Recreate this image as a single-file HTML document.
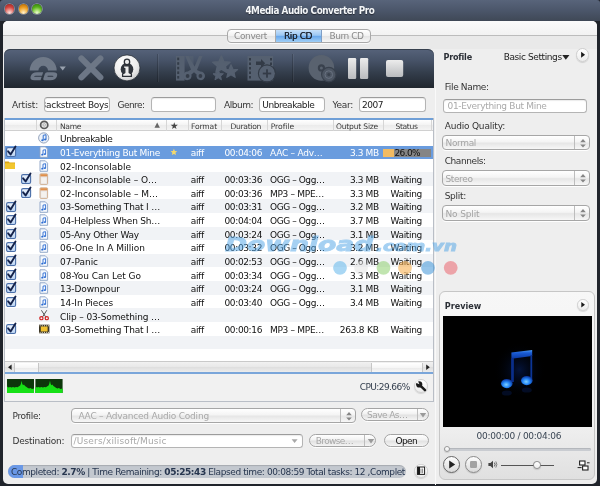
<!DOCTYPE html>
<html lang="en"><head><meta charset="utf-8"><title>4Media Audio Converter Pro</title>
<style>
html,body{margin:0;padding:0;}
body{width:600px;height:486px;overflow:hidden;background:#20242b;position:relative;font-family:"DejaVu Sans","Liberation Sans",sans-serif;font-size:9px;}
div,span,svg{position:absolute;box-sizing:border-box;}
b{font-weight:bold;}
.t{white-space:nowrap;line-height:14px;height:14px;}
.win{left:0;top:0;width:600px;height:486px;background:#20242b;border-radius:3px;}
.titlebar{left:0;top:0;width:600px;height:21px;border-radius:3px 3px 0 0;background:linear-gradient(#58647a,#4b566a 50%,#3f4856);}
.tl{width:9.8px;height:9.8px;border-radius:50%;top:4.1px;box-shadow:0 0 0 .8px rgba(235,240,248,.45),0 0 2px rgba(0,0,0,.5);}
.inner{left:2.8px;top:21px;width:594px;height:462.5px;background:#eeeeee;border-radius:5px;overflow:hidden;}
.tabtop{left:0;top:0;width:594px;height:14px;background:linear-gradient(#fbfbfb,#f2f2f2);}
.tabline{left:0;top:14px;width:594px;height:1px;background:#bcbcbc;}
.tabbot{left:0;top:15px;width:594px;height:13px;background:#e9e9e9;}
.seg{left:227.4px;top:28.5px;width:143.2px;height:14.2px;border-radius:4px;border:1px solid #a9a9a9;background:linear-gradient(#ffffff,#f1f1f1 48%,#e4e4e4 52%,#f6f6f6);overflow:hidden;box-shadow:0 1px 0 rgba(255,255,255,.8);}
.segsel{left:46.4px;top:-1px;width:47.6px;height:14.2px;background:linear-gradient(#cfe5fb,#9cc8f4 45%,#69a8ec 52%,#a9d6f9);border-left:1px solid #7f9fc6;border-right:1px solid #7f9fc6;}
.toolbar{left:4.3px;top:48.8px;width:429.8px;height:39px;border-radius:6px 6px 0 0;background:linear-gradient(#56637a,#465267 30%,#343e4c 60%,#20262e);box-shadow:inset 0 1px 0 rgba(30,36,44,.55);}
.tsep{top:5px;width:1px;height:28px;background:rgba(0,0,0,.18);box-shadow:1px 0 0 rgba(255,255,255,.06);}
.inp{background:#fff;border:1px solid #b4b4b4;border-top-color:#9c9c9c;border-radius:3.5px;height:14.8px;top:97px;box-shadow:inset 0 1px 1px rgba(0,0,0,.08);}
.table{left:4.3px;top:118px;width:429.4px;height:283.5px;background:#f1f1f1;border:1px solid #b9bec6;border-top:none;}
.blueline{left:0;width:100%;height:1.8px;background:#6f9fd7;}
.thead{left:0;top:1.8px;width:100%;height:11.4px;background:linear-gradient(#ffffff,#f3f3f3 50%,#ebebeb 52%,#f4f4f4);border-bottom:1px solid #d0d0d0;}
.hs{top:0.5px;width:1px;height:10.5px;background:#d6d6d6;}
.tbody{left:5.3px;top:131.1px;width:427.4px;height:230px;background:#fff;}
.row{left:5.3px;width:427.4px;}
.row.alt{background:#f1f3f6;}
.row.sel{background:#6a9cde;}
.cb{width:12px;height:12px;overflow:visible;}
.ic{width:10px;height:12px;overflow:visible;}
.scroll{left:5.3px;top:361px;width:427.4px;height:11.3px;background:linear-gradient(#f1f1f1,#e8e8e8 50%,#dfdfdf 55%,#ececec);border-top:1px solid #c9c9c9;}
.pill{border-radius:8px;border:1px solid #a4a4a4;background:linear-gradient(#ffffff,#f2f2f2 45%,#e2e2e2 55%,#f4f4f4);height:13.6px;box-shadow:0 1px 0 rgba(255,255,255,.9);}
.sel2{border-radius:4px;border:1px solid #a6a6a6;background:linear-gradient(#ffffff,#f4f4f4 45%,#e6e6e6 55%,#f7f7f7);height:15.2px;margin-top:-.3px;box-shadow:0 1px 0 rgba(255,255,255,.9);}
.sdiv{top:0;width:1px;height:100%;background:#bdbdbd;}
.rbtn{border-radius:50%;border:1px solid #cfcfcf;background:linear-gradient(#ffffff,#ececec);box-shadow:0 1px 1px rgba(0,0,0,.12);}
.preview{left:439.3px;top:290.6px;width:155.4px;height:189.8px;border-radius:6px;border:1px solid #c6c6c6;background:linear-gradient(#f7f7f7,#f0f0f0 70%,#e0e0e0);}
.video{left:442.6px;top:316px;width:149.6px;height:111.2px;background:#000;}

</style></head>
<body>
<div id="app" style="left:0;top:0;width:600px;height:486px;will-change:transform;">
<svg width="0" height="0" style="left:-10px;top:-10px">
<defs>
<symbol id="cb" viewBox="0 0 12 12" overflow="visible">
 <linearGradient id="cbg" x1="0" y1="0" x2="0" y2="1"><stop offset="0" stop-color="#f2f7fd"/><stop offset=".5" stop-color="#d3e3f7"/><stop offset="1" stop-color="#b9d3f3"/></linearGradient>
 <rect x="0.6" y="2.6" width="9" height="8.9" rx="1.5" fill="url(#cbg)" stroke="#4a6ea8" stroke-width="1.1"/>
 <path d="M2.1 6.3 L4.6 9.4 L9.5 1.6" fill="none" stroke="#14224a" stroke-width="1.9" stroke-linecap="round" stroke-linejoin="round"/>
</symbol>
<symbol id="mus" viewBox="0 0 10 12" overflow="visible">
 <path d="M1 0.8 H6.3 L8.6 3.1 V11.3 H1 Z" fill="#f4f8fd" stroke="#8aa2c4" stroke-width=".9"/>
 <path d="M4 8.6 V4.2 L6.6 3.7 V8" fill="none" stroke="#2a6bd2" stroke-width=".9"/>
 <ellipse cx="3.3" cy="8.7" rx="1.1" ry=".9" fill="#2a6bd2"/>
 <ellipse cx="5.9" cy="8.1" rx="1.1" ry=".9" fill="#2a6bd2"/>
</symbol>
<symbol id="doc" viewBox="0 0 10 12" overflow="visible">
 <rect x="1" y="0.8" width="7.6" height="10.6" rx=".8" fill="#e6e4e6" stroke="#c9a27c" stroke-width=".8"/>
 <rect x="1.4" y="1.2" width="6.8" height="2.2" fill="#e0904a"/>
 <rect x="2.2" y="4.6" width="5.2" height="5.8" fill="#f5f2ee"/>
</symbol>
</defs>
</svg>
<div class="win"></div>
<div class="titlebar"></div>
<div class="tl" style="left:4.7px;background:radial-gradient(circle at 50% 88%,#fbe6e2 0%,#ee9a94 28%,#d4453f 58%,#9a2320 100%);"></div>
<div class="tl" style="left:18.6px;background:radial-gradient(circle at 50% 88%,#fff2d2 0%,#f8c970 28%,#e9981c 58%,#a8650a 100%);"></div>
<div class="tl" style="left:32.1px;background:radial-gradient(circle at 50% 88%,#eefbd6 0%,#a8e070 28%,#58b01c 58%,#2c760c 100%);"></div>

<div class="inner">
 <div class="tabtop"></div><div class="tabline"></div><div class="tabbot"></div>
</div>
<div class="seg"><div class="segsel"></div><div class="sdiv" style="left:46.4px;background:#a9a9a9"></div></div>

<div class="toolbar">
 <div class="tsep" style="left:153px"></div>
 <div class="tsep" style="left:288px"></div>
</div>
<!-- toolbar icons -->
<svg style="left:0;top:0" width="600" height="100" viewBox="0 0 600 100">
 <!-- CD icon -->
 <g fill="#6f7988">
  <path d="M29.7 70.6 A13.5 13.5 0 0 1 56.7 70.6 L48 70.6 A4.8 4.8 0 0 0 38.4 70.6 Z"/>
  <path d="M59.6 66.6 h6.2 l-3.1 3.9 Z" fill="#98a1ae"/>
 </g>
 <circle cx="43.2" cy="70.6" r="2.6" fill="none" stroke="#6f7988" stroke-width="0"/>
 <g fill="none" stroke="#6f7988" stroke-width="3.5" stroke-linejoin="round" transform="skewX(-18)">
  <path d="M66.6 73.9 h-6.2 q-3.2 0 -3.2 2.3 q0 2.3 3.2 2.3 h6.2"/>
  <path d="M70.6 73.9 h6 q3.4 0 3.4 2.3 q0 2.3 -3.4 2.3 h-6 Z"/>
 </g>
 <!-- X -->
 <g stroke="#6d7786" stroke-width="6" stroke-linecap="round"><path d="M81.4 58.4 L100.4 77.4"/><path d="M100.4 58.4 L81.4 77.4"/></g>
 <!-- info -->
 <defs><radialGradient id="ig" cx=".4" cy=".3" r=".8"><stop offset="0" stop-color="#ffffff"/><stop offset=".6" stop-color="#ececec"/><stop offset="1" stop-color="#c4c6c9"/></radialGradient></defs>
 <circle cx="127" cy="67.9" r="13" fill="url(#ig)" stroke="#2a3039" stroke-width=".8"/>
 <ellipse cx="127" cy="69.2" rx="6.3" ry="6.4" fill="#30353d"/>
 <g fill="#ececec" stroke="#2b2f36" stroke-width="1.3" stroke-linejoin="round"><path d="M123.4 65.8 h5.8 v7 l2.2 1.2 v2.4 h-8.8 v-2.4 l2.2 -1.2 v-4.4 h-1.4 Z"/><circle cx="127" cy="61.9" r="2.7"/></g>
 <!-- clip (film+scissors) -->
 <g fill="#556070">
  <path d="M176 56 h8.6 v24.6 h-8.6 Z"/>
  <path d="M184.6 56 h3 l6 9 v-9 h-1 Z" opacity=".6"/>
  <path d="M185.2 56 L188.6 56 L194.6 66.4 L199 56 L202.6 56 L197 70 L200.2 71.6 A4.3 4.3 0 1 1 196.6 74.6 L194 72.2 L191.4 74.6 A4.3 4.3 0 1 1 187.8 71.6 L191 69.6 Z"/>
 </g>
 <g fill="#343c48"><rect x="177.2" y="57.6" width="2" height="2.6"/><rect x="177.2" y="62.2" width="2" height="2.6"/><rect x="177.2" y="66.8" width="2" height="2.6"/><rect x="177.2" y="71.4" width="2" height="2.6"/><rect x="177.2" y="76" width="2" height="2.6"/><circle cx="187.6" cy="76" r="1.9"/><circle cx="200.4" cy="76" r="1.9"/></g>
 <!-- stars -->
 <g fill="#556070" stroke="#556070" stroke-width="1.6" stroke-linejoin="round">
  <path id="st" d="M0 -9 L2.6 -2.9 L9 -2.5 L4.1 1.7 L5.6 8 L0 4.6 L-5.6 8 L-4.1 1.7 L-9 -2.5 L-2.6 -2.9 Z" transform="translate(221.4,64.6) scale(.96)"/>
  <path d="M0 -9 L2.6 -2.9 L9 -2.5 L4.1 1.7 L5.6 8 L0 4.6 L-5.6 8 L-4.1 1.7 L-9 -2.5 L-2.6 -2.9 Z" transform="translate(231,71.4) scale(.74)"/>
  <path d="M0 -9 L2.6 -2.9 L9 -2.5 L4.1 1.7 L5.6 8 L0 4.6 L-5.6 8 L-4.1 1.7 L-9 -2.5 L-2.6 -2.9 Z" transform="translate(218.2,75.2) scale(.58)"/>
 </g>
 <!-- film + plus -->
 <g fill="#556070">
  <rect x="247.5" y="56" width="25.6" height="24.6"/>
  <circle cx="267" cy="73.5" r="8"/>
 </g>
 <g fill="#333b47">
  <rect x="249" y="58" width="2" height="2.5"/><rect x="249" y="62.5" width="2" height="2.5"/><rect x="249" y="67" width="2" height="2.5"/><rect x="249" y="71.5" width="2" height="2.5"/><rect x="249" y="76" width="2" height="2.5"/>
  <rect x="270" y="58" width="2" height="2.5"/><rect x="270" y="62.5" width="2" height="2.5"/>
  <path d="M256 61.5 h5 v-2.6 l4.2 4.4 l-4.2 4.4 v-2.6 h-5 Z"/>
  <circle cx="267" cy="73.5" r="8.6" fill="none" stroke="#333b47" stroke-width="1.1"/>
  <rect x="262.8" y="72.6" width="8.4" height="1.8"/><rect x="266.1" y="69.3" width="1.8" height="8.4"/>
 </g>
 <!-- disc -->
 <circle cx="321.4" cy="67.9" r="12.8" fill="#59626f"/>
 <circle cx="321.4" cy="67.9" r="3.6" fill="#39414d"/>
 <circle cx="321.4" cy="67.9" r="1.5" fill="#59626f"/>
 <circle cx="328.8" cy="74.6" r="7.2" fill="#4d5663" stroke="#39414d" stroke-width="1.2"/>
 <circle cx="328.8" cy="74.6" r="3.8" fill="none" stroke="#687180" stroke-width="1"/>
 <circle cx="328.8" cy="74.6" r="1.5" fill="#3a424e"/>
 <!-- pause -->
 <defs><linearGradient id="lg" x1="0" y1="0" x2="0" y2="1"><stop offset="0" stop-color="#ececec"/><stop offset="1" stop-color="#b9bbbe"/></linearGradient></defs>
 <rect x="348" y="58" width="8.2" height="21" rx="1.2" fill="url(#lg)"/>
 <rect x="360" y="58" width="8.2" height="21" rx="1.2" fill="url(#lg)"/>
 <rect x="386" y="60" width="17.2" height="17" rx="2" fill="url(#lg)"/>
</svg>

<!-- tag inputs -->
<div class="inp" style="left:44.2px;width:66px"></div>
<div class="inp" style="left:150.8px;width:65px"></div>
<div class="inp" style="left:259.2px;width:66px"></div>
<div class="inp" style="left:359.2px;width:66.4px"></div>

<!-- table -->
<div class="table">
 <div class="blueline" style="top:0"></div>
 <div class="thead">
  <div class="hs" style="left:30.7px"></div><div class="hs" style="left:51.2px"></div>
  <div class="hs" style="left:160.7px"></div><div class="hs" style="left:182.7px"></div><div class="hs" style="left:216.2px"></div><div class="hs" style="left:262.2px"></div>
  <div class="hs" style="left:327.7px"></div><div class="hs" style="left:377.7px"></div><div class="hs" style="left:426px"></div>
 </div>
</div>
<div class="tbody"></div>
<div class="row sel" style="top:145.84px;height:13.00px"></div>
<div class="row alt" style="top:172.02px;height:13.64px"></div>
<div class="row alt" style="top:199.30px;height:13.64px"></div>
<div class="row alt" style="top:226.58px;height:13.64px"></div>
<div class="row alt" style="top:253.86px;height:13.64px"></div>
<div class="row alt" style="top:281.14px;height:13.64px"></div>
<div class="row alt" style="top:308.42px;height:13.64px"></div>
<div class="row alt" style="top:335.70px;height:13.64px"></div>
<div class="scroll">
 <div style="left:9px;top:0.6px;width:25px;height:9.6px;border-left:1px solid #c6c6c6;border-right:1px solid #c6c6c6;background:linear-gradient(#ffffff,#f6f6f6 50%,#eaeaea 55%,#f6f6f6)"></div>
 <div style="left:366px;top:0.6px;width:51.6px;height:9.6px;border-left:1px solid #c6c6c6;border-right:1px solid #c6c6c6;background:linear-gradient(#ffffff,#f6f6f6 50%,#eaeaea 55%,#f6f6f6)"></div>
 <svg style="left:0;top:0" width="428" height="11" viewBox="0 0 428 11"><path d="M3 5.2 L6.6 2.4 V8 Z" fill="#222"/><path d="M424.8 5.2 L421.2 2.4 V8 Z" fill="#222"/></svg>
</div>
<div class="blueline" style="left:5.3px;top:372.4px;width:427.4px;height:1.5px;background:#7aa6da"></div>

<!-- progress in selected row -->
<div style="left:383px;top:149px;width:47.8px;height:7.6px;background:#858585"></div>
<div style="left:383px;top:149px;width:10.8px;height:7.6px;background:#f2bb62"></div>

<!-- header disc icon, row icons -->
<svg style="left:0;top:0" width="440" height="400" viewBox="0 0 440 400">
 <circle cx="44.2" cy="124.9" r="3.6" fill="#e4e4e4" stroke="#5c5c5c" stroke-width="1.7"/><circle cx="44.2" cy="124.9" r="1.2" fill="#fff" stroke="#8a8a8a" stroke-width=".6"/>
 <!-- itunes-like icon row0 -->
 <circle cx="43.7" cy="137.92" r="5.1" fill="#eef3fa" stroke="#8a9bb5" stroke-width=".9"/>
 <path d="M43.2 2.4 V-2.6 L46 -3.2 V1.6" transform="translate(0,137.92)" fill="none" stroke="#2f6fd0" stroke-width="1"/>
 <ellipse cx="42.4" cy="2.4" rx="1.2" ry="1" transform="translate(0,137.92)" fill="#2f6fd0"/><ellipse cx="45.2" cy="1.7" rx="1.2" ry="1" transform="translate(0,137.92)" fill="#2f6fd0"/>
 <!-- folder row2 -->
 <g transform="translate(0,165.20)"><path d="M5 -3.8 h3.6 l1 1 h5.4 v6.6 h-10 Z" fill="#d9a514"/><rect x="5" y="-1.9" width="10" height="5.7" rx=".6" fill="#f2c62e"/></g>
 <!-- star in sel row -->
 <path d="M0 -4.3 L1.25 -1.4 L4.3 -1.2 L1.95 .8 L2.7 3.8 L0 2.2 L-2.7 3.8 L-1.95 .8 L-4.3 -1.2 L-1.25 -1.4 Z" transform="translate(174.2,151.56) translate(-.3,.6) scale(.78)" fill="#f4d86c"/>
 <!-- scissors row13 -->
 <g transform="translate(0,315.24)"><path d="M41.4 -5 L45.6 1.6 M46.8 -5 L42.6 1.6" stroke="#555" stroke-width="1" fill="none"/><circle cx="41.4" cy="2.9" r="1.6" fill="none" stroke="#d02020" stroke-width="1.2"/><circle cx="46.8" cy="2.9" r="1.6" fill="none" stroke="#d02020" stroke-width="1.2"/></g>
 <!-- film row14 -->
 <g transform="translate(0,328.88)"><rect x="39" y="-4.2" width="10.4" height="8.6" fill="#3a3424"/><rect x="40.8" y="-2.4" width="6.8" height="5" fill="#f0c030"/><g fill="#e9e2c8"><rect x="39.6" y="-3.6" width="1" height="1"/><rect x="41.8" y="-3.6" width="1" height="1"/><rect x="44" y="-3.6" width="1" height="1"/><rect x="46.2" y="-3.6" width="1" height="1"/><rect x="48" y="-3.6" width="1" height="1"/><rect x="39.6" y="3" width="1" height="1"/><rect x="41.8" y="3" width="1" height="1"/><rect x="44" y="3" width="1" height="1"/><rect x="46.2" y="3" width="1" height="1"/><rect x="48" y="3" width="1" height="1"/></g></g>
</svg>
<svg class="cb" style="left:5.9px;top:144.96px"><use href="#cb"/></svg>
<svg class="cb" style="left:5.9px;top:199.52px"><use href="#cb"/></svg>
<svg class="cb" style="left:5.9px;top:213.16px"><use href="#cb"/></svg>
<svg class="cb" style="left:5.9px;top:226.80px"><use href="#cb"/></svg>
<svg class="cb" style="left:5.9px;top:240.44px"><use href="#cb"/></svg>
<svg class="cb" style="left:5.9px;top:254.08px"><use href="#cb"/></svg>
<svg class="cb" style="left:5.9px;top:267.72px"><use href="#cb"/></svg>
<svg class="cb" style="left:5.9px;top:281.36px"><use href="#cb"/></svg>
<svg class="cb" style="left:5.9px;top:295.00px"><use href="#cb"/></svg>
<svg class="cb" style="left:5.9px;top:322.28px"><use href="#cb"/></svg>
<svg class="cb" style="left:21.2px;top:172.24px"><use href="#cb"/></svg>
<svg class="cb" style="left:21.2px;top:185.88px"><use href="#cb"/></svg>
<svg class="ic" style="left:38.8px;top:145.96px"><use href="#mus"/></svg>
<svg class="ic" style="left:38.8px;top:159.60px"><use href="#mus"/></svg>
<svg class="ic" style="left:38.8px;top:200.52px"><use href="#mus"/></svg>
<svg class="ic" style="left:38.8px;top:214.16px"><use href="#mus"/></svg>
<svg class="ic" style="left:38.8px;top:227.80px"><use href="#mus"/></svg>
<svg class="ic" style="left:38.8px;top:241.44px"><use href="#mus"/></svg>
<svg class="ic" style="left:38.8px;top:255.08px"><use href="#mus"/></svg>
<svg class="ic" style="left:38.8px;top:268.72px"><use href="#mus"/></svg>
<svg class="ic" style="left:38.8px;top:282.36px"><use href="#mus"/></svg>
<svg class="ic" style="left:38.8px;top:296.00px"><use href="#mus"/></svg>
<svg class="ic" style="left:38.6px;top:173.24px"><use href="#doc"/></svg>
<svg class="ic" style="left:38.6px;top:186.88px"><use href="#doc"/></svg>

<!-- spectrum -->
<svg style="left:7px;top:378.6px" width="56" height="14.4" viewBox="0 0 56 14.4">
 <rect x="0" y="0" width="27" height="14.2" fill="#0d370b"/><rect x="28.4" y="0" width="27.2" height="14.2" fill="#0d370b"/>
 <path d="M0 14.2 L0.0 7.6 L1.5 8.4 L3.0 8 L4.5 8.6 L6.0 8.1 L7.5 8.5 L9.0 7.9 L10.5 8.2 L12.0 7.2 L13.2 6.6 L14.0 4.6 L14.6 1.8 L15.2 4.8 L16.0 6.2 L17.0 5.4 L18.0 7 L19.2 7.8 L20.5 8.8 L22.0 9.4 L23.5 9.1 L25.0 10 L27.0 9.6 V14.2 Z" fill="#16e016"/>
 <path d="M28.4 14.2 L28.4 7.6 L29.9 8.4 L31.4 8 L32.9 8.6 L34.4 8.1 L35.9 8.5 L37.4 7.9 L38.9 8.2 L40.4 7.2 L41.6 6.6 L42.4 4.6 L43.0 1.8 L43.6 4.8 L44.4 6.2 L45.4 5.4 L46.4 7 L47.6 7.8 L48.9 8.8 L50.4 9.4 L51.9 9.1 L53.4 10 L55.6 9.6 V14.2 Z" fill="#16e016"/>
</svg>

<!-- cpu wrench -->
<div class="rbtn" style="left:414px;top:379px;width:14.4px;height:14.4px"></div>
<svg style="left:414px;top:379px" width="14.4" height="14.4" viewBox="0 0 14.4 14.4"><path d="M5.6 5.8 L11 11.2" stroke="#1a1a1a" stroke-width="2.5" stroke-linecap="round"/><circle cx="5.2" cy="5.4" r="3.1" fill="#1a1a1a"/><path d="M5.4 5.2 L1.2 3.4 L3.6 1 Z" fill="#f6f6f6"/></svg>

<!-- profile select -->
<div class="sel2" style="left:71px;top:408.2px;width:284.6px;"><div class="sdiv" style="left:268px"></div>
 <svg style="left:271px;top:1px" width="12" height="12" viewBox="0 0 12 12"><path d="M6 2 L8.8 5.2 H3.2 Z M6 10.6 L8.8 7.4 H3.2 Z" fill="#858585"/></svg></div>
<div class="pill" style="left:361px;top:407.6px;width:67.8px"><div class="sdiv" style="left:54.5px"></div>
 <svg style="left:56px;top:2.4px" width="10" height="8" viewBox="0 0 10 8"><path d="M1.8 2 H8.2 L5 6.4 Z" fill="#9a9a9a"/></svg></div>
<!-- destination -->
<div class="inp" style="left:71px;top:434px;width:231.6px;height:14.4px;"></div>
<svg style="left:290px;top:437.4px" width="10" height="8" viewBox="0 0 10 8"><path d="M1.6 2.2 H7.6 L4.6 6 Z" fill="#a8a8a8"/></svg>
<div class="pill" style="left:308.7px;top:433.7px;width:67.4px"><div class="sdiv" style="left:54.5px"></div>
 <svg style="left:56px;top:2.4px" width="10" height="8" viewBox="0 0 10 8"><path d="M1.8 2 H8.2 L5 6.4 Z" fill="#9a9a9a"/></svg></div>
<div class="pill" style="left:383.7px;top:433.7px;width:45px"></div>

<!-- status bar -->
<div style="left:8px;top:465px;width:398px;height:13px;border-radius:6.5px;background:#c3c8cf;overflow:hidden;box-shadow:inset 0 1px 1px rgba(0,0,0,.15)"><div style="left:0;top:0;width:15px;height:13px;background:#6a98e6"></div></div>
<div class="rbtn" style="left:414.4px;top:464.4px;width:13.4px;height:13.4px"></div>
<svg style="left:414.4px;top:464.4px" width="13.4" height="13.4" viewBox="0 0 13.4 13.4"><rect x="3.4" y="3" width="7.2" height="7.4" fill="#fff" stroke="#1c1c1c" stroke-width="1"/><rect x="3.4" y="3" width="2.6" height="7.4" fill="#1c1c1c"/><path d="M7 4.6 v4.6 M8.6 4.6 v4.6" stroke="#555" stroke-width=".7"/></svg>

<div style="left:434.8px;top:88px;width:1.2px;height:397px;background:#f9f9f9"></div>
<!-- right panel -->
<div class="rbtn" style="left:576px;top:48.2px;width:13.4px;height:13.4px"></div>
<svg style="left:576px;top:48.2px" width="13.4" height="13.4" viewBox="-0.5 -0.5 13.4 13.4"><path d="M4.6 3.2 L8.6 6.2 L4.6 9.2 Z" fill="#1a1a1a"/></svg>
<div class="inp" style="left:443.3px;top:98.5px;width:144px;height:14px"></div>
<div class="sel2" style="left:442.2px;top:135.3px;width:147.4px"><div class="sdiv" style="left:131.3px"></div><svg style="left:134px;top:1px" width="12" height="12" viewBox="0 0 12 12"><path d="M6 2 L8.8 5.2 H3.2 Z M6 10.6 L8.8 7.4 H3.2 Z" fill="#858585"/></svg></div>
<div class="sel2" style="left:442.2px;top:170.7px;width:147.4px"><div class="sdiv" style="left:131.3px"></div><svg style="left:134px;top:1px" width="12" height="12" viewBox="0 0 12 12"><path d="M6 2 L8.8 5.2 H3.2 Z M6 10.6 L8.8 7.4 H3.2 Z" fill="#858585"/></svg></div>
<div class="sel2" style="left:442.2px;top:205.7px;width:147.4px"><div class="sdiv" style="left:131.3px"></div><svg style="left:134px;top:1px" width="12" height="12" viewBox="0 0 12 12"><path d="M6 2 L8.8 5.2 H3.2 Z M6 10.6 L8.8 7.4 H3.2 Z" fill="#858585"/></svg></div>

<!-- preview -->
<div class="preview"></div>
<div class="rbtn" style="left:577.2px;top:299.4px;width:11.6px;height:11.6px"></div>
<svg style="left:577.2px;top:299.4px" width="11.6" height="11.6" viewBox="0 0 11.6 11.6"><path d="M4.3 3 L8 5.8 L4.3 8.6 Z" fill="#1a1a1a"/></svg>
<div class="video"></div>
<svg style="left:442.6px;top:316px" width="149.6" height="111.2" viewBox="442.6 316 149.6 111.2">
 <defs>
  <radialGradient id="glow"><stop offset="0" stop-color="#0a339a" stop-opacity=".38"/><stop offset="1" stop-color="#000" stop-opacity="0"/></radialGradient>
  <radialGradient id="head" cx=".45" cy=".62" r=".62"><stop offset="0" stop-color="#7fd0ff"/><stop offset=".5" stop-color="#2384f4"/><stop offset="1" stop-color="#0a2f96"/></radialGradient>
  <linearGradient id="beam" x1="0" y1="0" x2="0" y2="1"><stop offset="0" stop-color="#4a9af6"/><stop offset=".09" stop-color="#1a5cd4"/><stop offset=".26" stop-color="#0c3aa4"/><stop offset="1" stop-color="#0a2c84"/></linearGradient>
 </defs>
 <ellipse cx="519" cy="370" rx="26" ry="28" fill="url(#glow)"/>
 <path d="M511 352.6 L531.8 350 V356 L513.2 358.4 V382 H511 Z" fill="url(#beam)"/>
 <path d="M530 355 H531.8 V379 H530 Z" fill="#0c3596"/>
 <path d="M511 358 H513.2 V382 H511 Z" fill="#0a2e8a"/>
 <ellipse cx="506.4" cy="383.6" rx="5.8" ry="4.6" fill="url(#head)"/>
 <ellipse cx="526.4" cy="380.6" rx="5.8" ry="4.6" fill="url(#head)"/>
 <ellipse cx="506.4" cy="393" rx="5" ry="2.6" fill="#0b2f8a" opacity=".25"/>
 <ellipse cx="526.4" cy="390" rx="5" ry="2.6" fill="#0b2f8a" opacity=".25"/>
</svg>
<!-- seek bar -->
<div style="left:444px;top:447.6px;width:147px;height:3.2px;border-radius:2px;background:#c9ccd1;box-shadow:inset 0 1px 0 #b4b7bc"></div>
<div class="rbtn" style="left:443.5px;top:445.6px;width:6.6px;height:6.6px;border-color:#999"></div>
<!-- play / stop -->
<div class="rbtn" style="left:442.8px;top:456px;width:17px;height:17px;border-color:#666;background:linear-gradient(#fdfdfd,#d9d9d9)"></div>
<svg style="left:442.8px;top:456px" width="17" height="17" viewBox="0 0 17 17"><path d="M6.2 4.4 L12.2 8.5 L6.2 12.6 Z" fill="#222"/></svg>
<div class="rbtn" style="left:464.6px;top:456px;width:17px;height:17px;border-color:#8a8a8a;background:linear-gradient(#fdfdfd,#d9d9d9)"></div>
<svg style="left:464.6px;top:456px" width="17" height="17" viewBox="0 0 17 17"><rect x="5" y="5" width="7" height="7" rx="1.2" fill="#a2a2a2"/></svg>
<svg style="left:486.6px;top:459.4px" width="12" height="11" viewBox="0 0 12 11"><path d="M1.4 4 H3.4 L6 1.8 V9.2 L3.4 7 H1.4 Z" fill="#444"/><path d="M7.4 3.6 Q8.8 5.5 7.4 7.4" stroke="#444" stroke-width=".9" fill="none"/><path d="M8.8 2.4 Q11 5.5 8.8 8.6" stroke="#666" stroke-width=".8" fill="none"/></svg>
<div style="left:501px;top:464.6px;width:53px;height:1.2px;background:#555"></div>
<div class="rbtn" style="left:533px;top:461.4px;width:7.6px;height:7.6px;border-color:#888"></div>
<svg style="left:577px;top:460px" width="13" height="11" viewBox="0 0 13 11"><rect x="2.6" y="1" width="5.4" height="4" fill="#fff" stroke="#222" stroke-width="1.1"/><rect x="5.6" y="6" width="5.4" height="4" fill="#fff" stroke="#222" stroke-width="1.1"/><path d="M0.6 7.6 h4 M10 2.8 h2.6" stroke="#222" stroke-width="1"/></svg>

<span class="t" style="left:245.40px;top:3.50px;font-size:9.8px;color:#f4f6f8;font-weight:bold;letter-spacing:-0.428px;font-family:'DejaVu Sans Condensed','DejaVu Sans',sans-serif;text-shadow:0 1px 1px rgba(0,0,0,.5);">4Media Audio Converter Pro</span>
<span class="t" style="left:234.00px;top:28.90px;font-size:9px;color:#8a8a8a;letter-spacing:-0.371px;">Convert</span>
<span class="t" style="left:284.00px;top:28.90px;font-size:9px;color:#1c2430;letter-spacing:-0.424px;text-shadow:0 0 .4px #1c2430;">Rip CD</span>
<span class="t" style="left:329.50px;top:28.90px;font-size:9px;color:#8a8a8a;letter-spacing:-0.458px;">Burn CD</span>
<span class="t" style="left:12.00px;top:97.90px;font-size:9px;color:#333;letter-spacing:-0.163px;">Artist:</span>
<span class="t" style="left:40.20px;top:97.90px;font-size:9px;color:#222;letter-spacing:-0.302px;clip-path:inset(0 0 0 5.1px);">Backstreet Boys</span>
<span class="t" style="left:117.50px;top:97.90px;font-size:9px;color:#333;letter-spacing:-0.549px;">Genre:</span>
<span class="t" style="left:224.00px;top:97.90px;font-size:9px;color:#333;letter-spacing:-0.479px;">Album:</span>
<span class="t" style="left:262.30px;top:97.90px;font-size:9px;color:#222;letter-spacing:-0.445px;">Unbreakable</span>
<span class="t" style="left:332.50px;top:97.90px;font-size:9px;color:#333;letter-spacing:-0.287px;">Year:</span>
<span class="t" style="left:362.00px;top:97.90px;font-size:9px;color:#222;letter-spacing:-0.477px;">2007</span>
<span class="t" style="left:60.00px;top:119.50px;font-size:7.6px;color:#3a3a3a;letter-spacing:-0.352px;">Name</span>
<span class="t" style="left:191.00px;top:119.50px;font-size:7.6px;color:#3a3a3a;letter-spacing:-0.128px;">Format</span>
<span class="t" style="left:230.50px;top:119.50px;font-size:7.6px;color:#3a3a3a;letter-spacing:-0.311px;">Duration</span>
<span class="t" style="left:270.70px;top:119.50px;font-size:7.6px;color:#3a3a3a;letter-spacing:-0.018px;">Profile</span>
<span class="t" style="left:336.00px;top:119.50px;font-size:7.6px;color:#3a3a3a;letter-spacing:-0.217px;">Output Size</span>
<span class="t" style="left:395.50px;top:119.50px;font-size:7.6px;color:#3a3a3a;letter-spacing:-0.367px;">Status</span>
<span class="t" style="left:154.60px;top:117.90px;font-size:7px;color:#666;letter-spacing:1.609px;">▲</span>
<span class="t" style="left:170.00px;top:119.20px;font-size:9.5px;color:#444;letter-spacing:-0.531px;">★</span>
<span class="t" style="left:60.00px;top:132.22px;font-size:9px;color:#111;letter-spacing:-0.399px;">Unbreakable</span>
<span class="t" style="left:60.00px;top:145.86px;font-size:9px;color:#fff;letter-spacing:-0.276px;">01-Everything But Mine</span>
<span class="t" style="left:190.70px;top:145.86px;font-size:9px;color:#fff;letter-spacing:-0.305px;">aiff</span>
<span class="t" style="left:224.50px;top:145.86px;font-size:9px;color:#fff;letter-spacing:-0.365px;">00:04:06</span>
<span class="t" style="left:270.00px;top:145.86px;font-size:9px;color:#fff;letter-spacing:-0.245px;">AAC – Adv…</span>
<span class="t" style="left:350.00px;top:145.86px;font-size:9px;color:#fff;letter-spacing:-0.404px;">3.3 MB</span>
<span class="t" style="left:394.50px;top:145.86px;font-size:9px;color:#111;letter-spacing:-0.619px;">26.0%</span>
<span class="t" style="left:60.00px;top:159.50px;font-size:9px;color:#111;letter-spacing:-0.013px;">02-Inconsolable</span>
<span class="t" style="left:60.00px;top:173.14px;font-size:9px;color:#111;letter-spacing:-0.024px;">02-Inconsolable – O…</span>
<span class="t" style="left:190.70px;top:173.14px;font-size:9px;color:#111;letter-spacing:-0.305px;">aiff</span>
<span class="t" style="left:224.50px;top:173.14px;font-size:9px;color:#111;letter-spacing:-0.365px;">00:03:36</span>
<span class="t" style="left:270.00px;top:173.14px;font-size:9px;color:#111;letter-spacing:-0.427px;">OGG – Ogg…</span>
<span class="t" style="left:350.00px;top:173.14px;font-size:9px;color:#111;letter-spacing:-0.404px;">3.3 MB</span>
<span class="t" style="left:390.50px;top:173.14px;font-size:9px;color:#111;letter-spacing:-0.328px;">Waiting</span>
<span class="t" style="left:60.00px;top:186.78px;font-size:9px;color:#111;letter-spacing:-0.009px;">02-Inconsolable – M…</span>
<span class="t" style="left:190.70px;top:186.78px;font-size:9px;color:#111;letter-spacing:-0.305px;">aiff</span>
<span class="t" style="left:224.50px;top:186.78px;font-size:9px;color:#111;letter-spacing:-0.365px;">00:03:36</span>
<span class="t" style="left:270.00px;top:186.78px;font-size:9px;color:#111;letter-spacing:-0.303px;">MP3 – MPE…</span>
<span class="t" style="left:350.00px;top:186.78px;font-size:9px;color:#111;letter-spacing:-0.404px;">3.3 MB</span>
<span class="t" style="left:390.50px;top:186.78px;font-size:9px;color:#111;letter-spacing:-0.328px;">Waiting</span>
<span class="t" style="left:60.00px;top:200.42px;font-size:9px;color:#111;letter-spacing:-0.184px;">03-Something That I …</span>
<span class="t" style="left:190.70px;top:200.42px;font-size:9px;color:#111;letter-spacing:-0.305px;">aiff</span>
<span class="t" style="left:224.50px;top:200.42px;font-size:9px;color:#111;letter-spacing:-0.365px;">00:03:31</span>
<span class="t" style="left:270.00px;top:200.42px;font-size:9px;color:#111;letter-spacing:-0.427px;">OGG – Ogg…</span>
<span class="t" style="left:350.00px;top:200.42px;font-size:9px;color:#111;letter-spacing:-0.404px;">3.2 MB</span>
<span class="t" style="left:390.50px;top:200.42px;font-size:9px;color:#111;letter-spacing:-0.328px;">Waiting</span>
<span class="t" style="left:60.00px;top:214.06px;font-size:9px;color:#111;letter-spacing:-0.231px;">04-Helpless When Sh…</span>
<span class="t" style="left:190.70px;top:214.06px;font-size:9px;color:#111;letter-spacing:-0.305px;">aiff</span>
<span class="t" style="left:224.50px;top:214.06px;font-size:9px;color:#111;letter-spacing:-0.365px;">00:04:04</span>
<span class="t" style="left:270.00px;top:214.06px;font-size:9px;color:#111;letter-spacing:-0.427px;">OGG – Ogg…</span>
<span class="t" style="left:350.00px;top:214.06px;font-size:9px;color:#111;letter-spacing:-0.404px;">3.7 MB</span>
<span class="t" style="left:390.50px;top:214.06px;font-size:9px;color:#111;letter-spacing:-0.328px;">Waiting</span>
<span class="t" style="left:60.00px;top:227.70px;font-size:9px;color:#111;letter-spacing:-0.196px;">05-Any Other Way</span>
<span class="t" style="left:190.70px;top:227.70px;font-size:9px;color:#111;letter-spacing:-0.305px;">aiff</span>
<span class="t" style="left:224.50px;top:227.70px;font-size:9px;color:#111;letter-spacing:-0.365px;">00:03:24</span>
<span class="t" style="left:270.00px;top:227.70px;font-size:9px;color:#111;letter-spacing:-0.427px;">OGG – Ogg…</span>
<span class="t" style="left:350.00px;top:227.70px;font-size:9px;color:#111;letter-spacing:-0.404px;">3.1 MB</span>
<span class="t" style="left:390.50px;top:227.70px;font-size:9px;color:#111;letter-spacing:-0.328px;">Waiting</span>
<span class="t" style="left:60.00px;top:241.34px;font-size:9px;color:#111;letter-spacing:-0.019px;">06-One In A Million</span>
<span class="t" style="left:190.70px;top:241.34px;font-size:9px;color:#111;letter-spacing:-0.305px;">aiff</span>
<span class="t" style="left:224.50px;top:241.34px;font-size:9px;color:#111;letter-spacing:-0.365px;">00:03:32</span>
<span class="t" style="left:270.00px;top:241.34px;font-size:9px;color:#111;letter-spacing:-0.427px;">OGG – Ogg…</span>
<span class="t" style="left:350.00px;top:241.34px;font-size:9px;color:#111;letter-spacing:-0.404px;">3.2 MB</span>
<span class="t" style="left:390.50px;top:241.34px;font-size:9px;color:#111;letter-spacing:-0.328px;">Waiting</span>
<span class="t" style="left:60.00px;top:254.98px;font-size:9px;color:#111;letter-spacing:-0.049px;">07-Panic</span>
<span class="t" style="left:190.70px;top:254.98px;font-size:9px;color:#111;letter-spacing:-0.305px;">aiff</span>
<span class="t" style="left:224.50px;top:254.98px;font-size:9px;color:#111;letter-spacing:-0.365px;">00:02:53</span>
<span class="t" style="left:270.00px;top:254.98px;font-size:9px;color:#111;letter-spacing:-0.427px;">OGG – Ogg…</span>
<span class="t" style="left:350.00px;top:254.98px;font-size:9px;color:#111;letter-spacing:-0.404px;">2.6 MB</span>
<span class="t" style="left:390.50px;top:254.98px;font-size:9px;color:#111;letter-spacing:-0.328px;">Waiting</span>
<span class="t" style="left:60.00px;top:268.62px;font-size:9px;color:#111;letter-spacing:-0.038px;">08-You Can Let Go</span>
<span class="t" style="left:190.70px;top:268.62px;font-size:9px;color:#111;letter-spacing:-0.305px;">aiff</span>
<span class="t" style="left:224.50px;top:268.62px;font-size:9px;color:#111;letter-spacing:-0.365px;">00:03:34</span>
<span class="t" style="left:270.00px;top:268.62px;font-size:9px;color:#111;letter-spacing:-0.427px;">OGG – Ogg…</span>
<span class="t" style="left:350.00px;top:268.62px;font-size:9px;color:#111;letter-spacing:-0.404px;">3.3 MB</span>
<span class="t" style="left:390.50px;top:268.62px;font-size:9px;color:#111;letter-spacing:-0.328px;">Waiting</span>
<span class="t" style="left:60.00px;top:282.26px;font-size:9px;color:#111;letter-spacing:-0.075px;">13-Downpour</span>
<span class="t" style="left:190.70px;top:282.26px;font-size:9px;color:#111;letter-spacing:-0.305px;">aiff</span>
<span class="t" style="left:224.50px;top:282.26px;font-size:9px;color:#111;letter-spacing:-0.365px;">00:03:24</span>
<span class="t" style="left:270.00px;top:282.26px;font-size:9px;color:#111;letter-spacing:-0.427px;">OGG – Ogg…</span>
<span class="t" style="left:350.00px;top:282.26px;font-size:9px;color:#111;letter-spacing:-0.404px;">3.1 MB</span>
<span class="t" style="left:390.50px;top:282.26px;font-size:9px;color:#111;letter-spacing:-0.328px;">Waiting</span>
<span class="t" style="left:60.00px;top:295.90px;font-size:9px;color:#111;letter-spacing:-0.115px;">14-In Pieces</span>
<span class="t" style="left:190.70px;top:295.90px;font-size:9px;color:#111;letter-spacing:-0.305px;">aiff</span>
<span class="t" style="left:224.50px;top:295.90px;font-size:9px;color:#111;letter-spacing:-0.365px;">00:03:40</span>
<span class="t" style="left:270.00px;top:295.90px;font-size:9px;color:#111;letter-spacing:-0.427px;">OGG – Ogg…</span>
<span class="t" style="left:350.00px;top:295.90px;font-size:9px;color:#111;letter-spacing:-0.404px;">3.4 MB</span>
<span class="t" style="left:390.50px;top:295.90px;font-size:9px;color:#111;letter-spacing:-0.328px;">Waiting</span>
<span class="t" style="left:60.00px;top:309.54px;font-size:9px;color:#111;letter-spacing:-0.118px;">Clip – 03-Something …</span>
<span class="t" style="left:60.00px;top:323.18px;font-size:9px;color:#111;letter-spacing:-0.184px;">03-Something That I …</span>
<span class="t" style="left:190.70px;top:323.18px;font-size:9px;color:#111;letter-spacing:-0.305px;">aiff</span>
<span class="t" style="left:224.50px;top:323.18px;font-size:9px;color:#111;letter-spacing:-0.365px;">00:00:16</span>
<span class="t" style="left:270.00px;top:323.18px;font-size:9px;color:#111;letter-spacing:-0.303px;">MP3 – MPE…</span>
<span class="t" style="left:339.70px;top:323.18px;font-size:9px;color:#111;letter-spacing:-0.213px;">263.8 KB</span>
<span class="t" style="left:390.50px;top:323.18px;font-size:9px;color:#111;letter-spacing:-0.328px;">Waiting</span>
<span class="t" style="left:359.70px;top:379.50px;font-size:9px;color:#364150;letter-spacing:-0.566px;">CPU:29.66%</span>
<span class="t" style="left:12.50px;top:408.60px;font-size:9px;color:#333;letter-spacing:-0.341px;">Profile:</span>
<span class="t" style="left:12.50px;top:434.20px;font-size:9px;color:#333;letter-spacing:-0.249px;">Destination:</span>
<span class="t" style="left:78.40px;top:408.50px;font-size:9px;color:#a9a9a9;letter-spacing:-0.207px;">AAC – Advanced Audio Coding</span>
<span class="t" style="left:73.50px;top:434.30px;font-size:9px;color:#a9a9a9;letter-spacing:0.168px;">/Users/xilisoft/Music</span>
<span class="t" style="left:367.00px;top:407.90px;font-size:9px;color:#a8a8a8;letter-spacing:-0.539px;">Save As…</span>
<span class="t" style="left:315.70px;top:434.00px;font-size:9px;color:#a8a8a8;letter-spacing:-0.612px;">Browse…</span>
<span class="t" style="left:395.50px;top:434.00px;font-size:9px;color:#111;letter-spacing:-0.637px;">Open</span>
<span class="t" style="left:11.00px;top:464.90px;font-size:9px;color:#27364f;letter-spacing:-0.412px;">Completed: <b>2.7%</b> | Time Remaining: <b>05:25:43</b> Elapsed time: 00:08:59 Total tasks: 12 ,Complet</span>
<span class="t" style="left:443.60px;top:49.60px;font-size:9px;color:#2b2f36;font-weight:bold;letter-spacing:-0.252px;font-family:'DejaVu Sans Condensed','DejaVu Sans',sans-serif;">Profile</span>
<span class="t" style="left:503.70px;top:50.30px;font-size:9px;color:#222;letter-spacing:-0.401px;">Basic Settings</span>
<span class="t" style="left:562.30px;top:49.70px;font-size:9.4px;color:#222;transform:scaleY(.66);">▼</span>
<span class="t" style="left:444.70px;top:79.60px;font-size:9px;color:#333;letter-spacing:-0.352px;">File Name:</span>
<span class="t" style="left:447.50px;top:98.90px;font-size:9px;color:#aaa;letter-spacing:-0.321px;">01-Everything But Mine</span>
<span class="t" style="left:444.70px;top:118.60px;font-size:9px;color:#333;letter-spacing:-0.192px;">Audio Quality:</span>
<span class="t" style="left:445.50px;top:136.20px;font-size:9px;color:#a4a4a4;letter-spacing:-0.346px;">Normal</span>
<span class="t" style="left:444.70px;top:153.50px;font-size:9px;color:#333;letter-spacing:-0.408px;">Channels:</span>
<span class="t" style="left:445.50px;top:171.60px;font-size:9px;color:#a4a4a4;letter-spacing:-0.388px;">Stereo</span>
<span class="t" style="left:444.70px;top:188.90px;font-size:9px;color:#333;letter-spacing:-0.283px;">Split:</span>
<span class="t" style="left:445.50px;top:206.60px;font-size:9px;color:#a4a4a4;letter-spacing:-0.133px;">No Split</span>
<span class="t" style="left:444.70px;top:298.50px;font-size:9px;color:#2b2f36;font-weight:bold;letter-spacing:0.007px;font-family:'DejaVu Sans Condensed','DejaVu Sans',sans-serif;">Preview</span>
<span class="t" style="left:476.50px;top:429.10px;font-size:9px;color:#3a4654;letter-spacing:-0.253px;">00:00:00 / 00:04:06</span>
<!-- watermark -->
<div style="left:224.5px;top:229px;width:240px;height:30px;opacity:.5;color:#4da3e6;-webkit-text-stroke:.9px #4da3e6;font-style:italic;font-weight:bold;white-space:nowrap;">
 <span style="left:0;top:0;font-size:20px;line-height:30px;transform-origin:0 50%;transform:scaleX(1.33);">Download</span><span style="left:151px;top:5px;font-size:14px;line-height:24px;transform-origin:0 50%;transform:scaleX(1.3);">.com.vn</span>
</div>
<svg style="left:330px;top:258px" width="140" height="20" viewBox="330 258 140 20" opacity=".55">
 <circle cx="340" cy="267.8" r="6.9" fill="#63b8ec"/><circle cx="361" cy="267.8" r="6.9" fill="#e4e4e4"/><circle cx="383.5" cy="267.8" r="6.9" fill="#8fd070"/><circle cx="405" cy="267.8" r="6.9" fill="#f7ab45"/><circle cx="428" cy="267.8" r="6.9" fill="#3f95d8"/><circle cx="450.7" cy="267.8" r="6.9" fill="#ec6670"/>
</svg>


</div>
</body></html>
